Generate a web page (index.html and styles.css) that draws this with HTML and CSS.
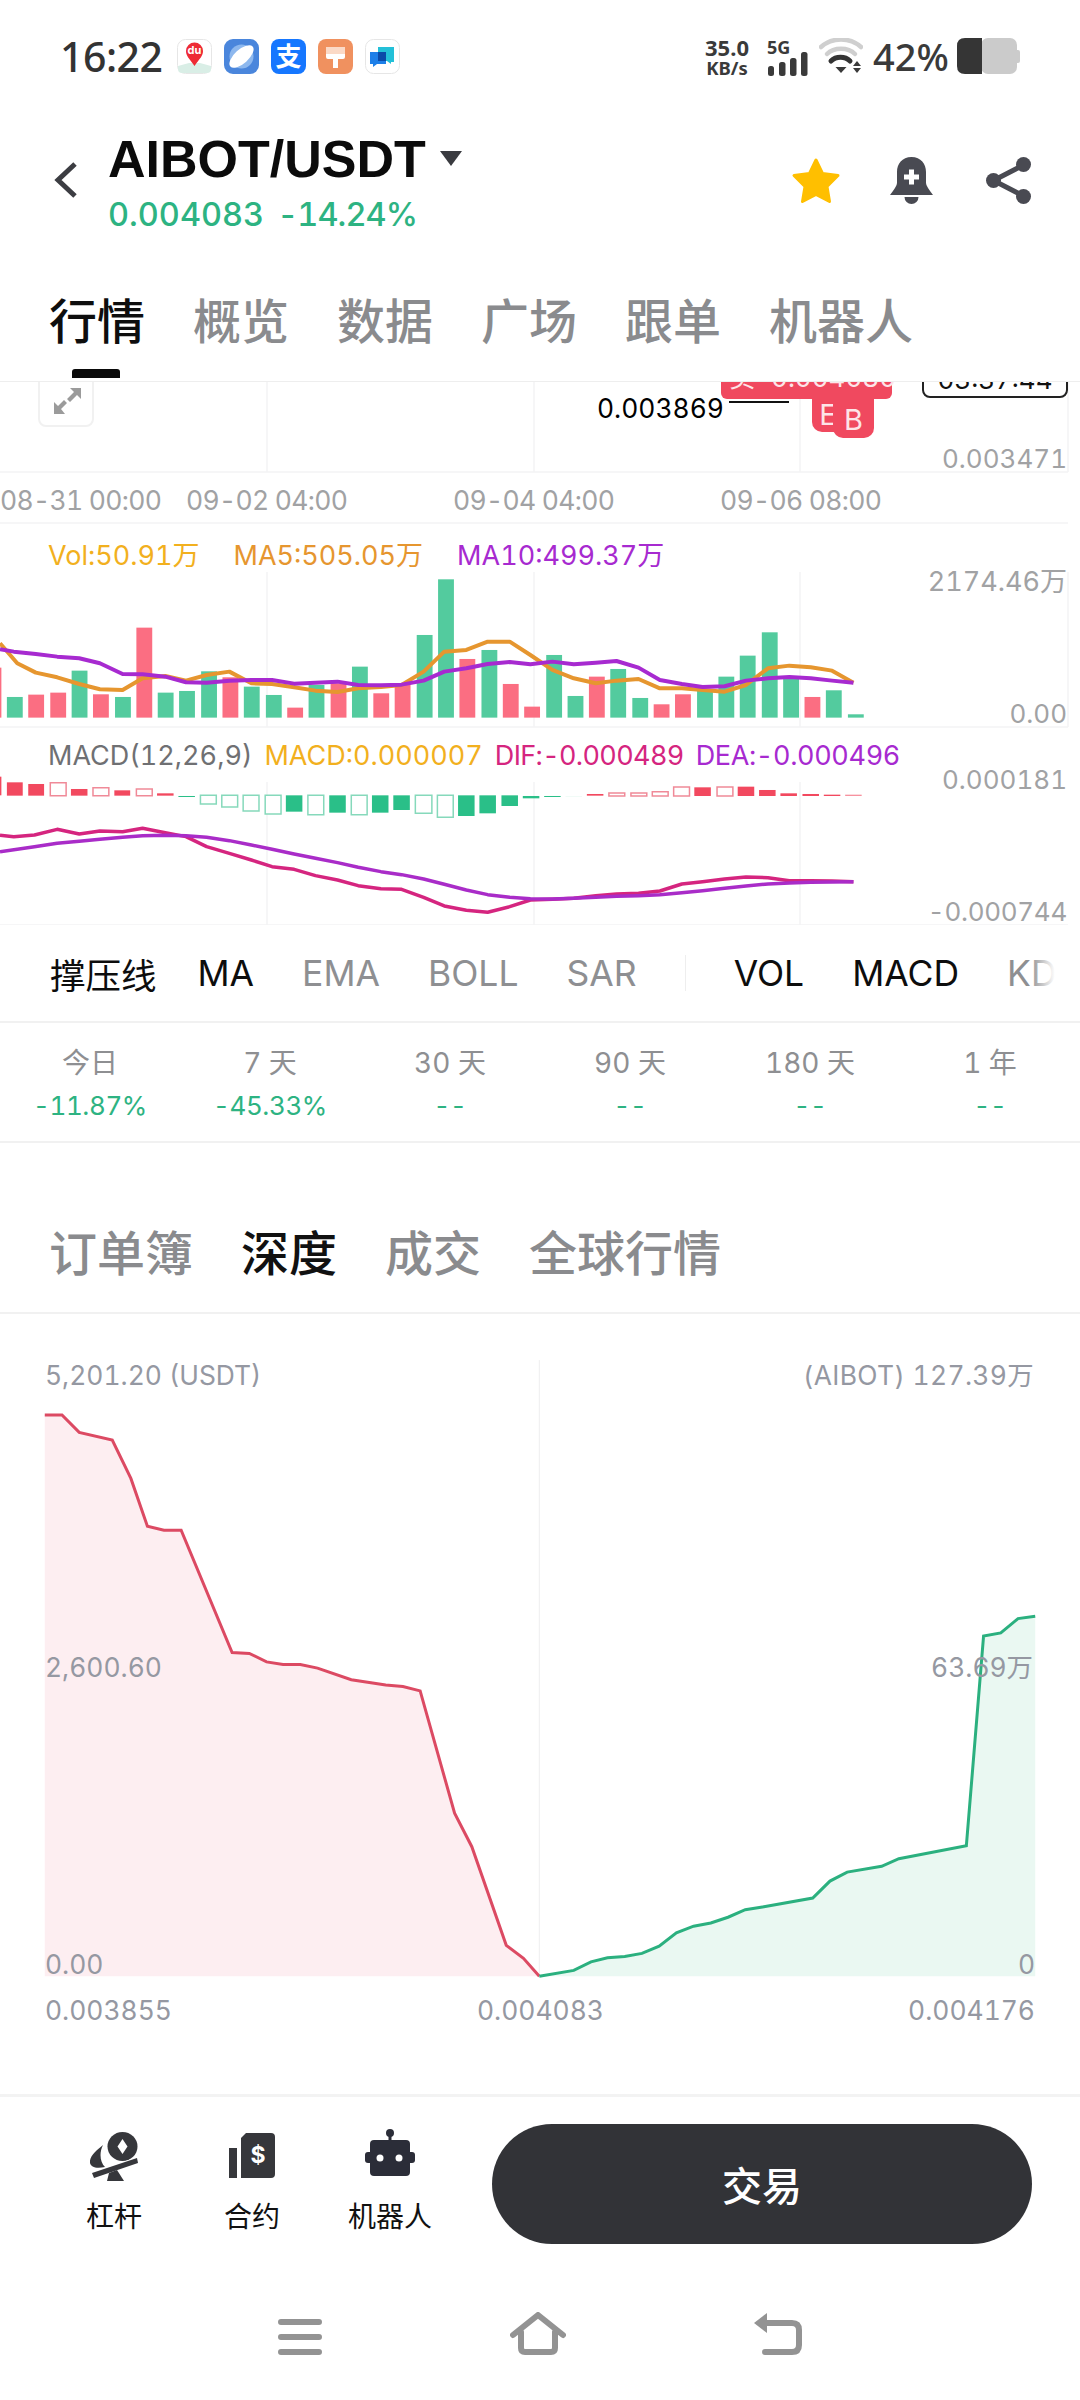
FILE: index.html
```html
<!DOCTYPE html>
<html lang="zh-CN">
<head>
<meta charset="utf-8">
<title>AIBOT/USDT</title>
<link rel="stylesheet" href="styles.css">
</head>
<body>
<div class="page">
  <header class="status">
    <span class="clock">16:22</span>
    <div class="apps">
      <svg class="app" viewBox="0 0 35 35"><rect x=".5" y=".5" width="34" height="34" rx="8" fill="#fff" stroke="#e6e6e6"/><path d="M1 27 L12 24 L23 24 L34 27 V30 Q34 34 30 34 H5 Q1 34 1 30Z" fill="#d9eee6"/><path d="M17.500 27 C12 19 9 17 9 12 A8.500 8.500 0 0 1 26 12 C26 17 23 19 17.500 27Z" fill="#ee2b35"/><text x="17.500" y="15" class="du">du</text></svg>
      <svg class="app" viewBox="0 0 35 35"><rect width="35" height="35" rx="9" fill="#4a86dc"/><circle cx="17.500" cy="17.500" r="12" fill="#8db8ee"/><ellipse cx="17.500" cy="17.500" rx="15" ry="7" transform="rotate(-42 17.500 17.500)" fill="#fff"/></svg>
      <svg class="app" viewBox="0 0 35 35"><rect width="35" height="35" rx="8" fill="#1677ff"/><text x="17.500" y="27" class="zhi">支</text></svg>
      <svg class="app" viewBox="0 0 35 35"><rect width="35" height="35" rx="8" fill="#f0915f"/><path d="M8 8 H27 V18 Q27 20 25 20 H20 V29 H15 V20 H10 Q8 20 8 18Z" fill="#fff"/><rect x="8" y="8" width="19" height="7" fill="#fbd9c6"/></svg>
      <svg class="app" viewBox="0 0 35 35"><rect x=".5" y=".5" width="34" height="34" rx="8" fill="#fff" stroke="#e6e6e6"/><path d="M13 8 H29 V23 H26 V25 L22 22 H13Z" fill="#23c0d8"/><path d="M5 13 H21 V25 H12 L8 28 V25 H5Z" fill="#1d7fe8"/><rect x="13" y="13" width="8" height="9" fill="#0b4aa8"/></svg>
    </div>
    <div class="sys">
      <div class="speed"><span class="speed-num">35.0</span><span class="speed-unit">KB/s</span></div>
      <div class="net">
        <span class="net-type">5G</span>
        <svg class="bars" viewBox="0 0 40 24"><rect x="0" y="14" width="6" height="10" rx="2.500"/><rect x="11" y="10" width="6.500" height="14" rx="2.500"/><rect x="22" y="6" width="6.500" height="18" rx="2.500"/><rect x="33" y="0" width="6.500" height="24" rx="2.500"/></svg>
      </div>
      <svg class="wifi" viewBox="0 0 44 36"><path d="M2 9 C13 -1 31 -1 42 9" class="wifi-off"/><path d="M8 16 C15 9 29 9 36 16" class="wifi-off"/><path d="M12 23 C17 18 26 18 31 23" class="wifi-on"/><path d="M16.500 29 H27.500 L22 35Z"/><path d="M34 28 L38 23 L42 28Z"/><path d="M34 30 H42 L38 35Z"/></svg>
      <span class="pct">42%</span>
      <svg class="battery" viewBox="0 0 63 36"><rect x="24" y="0" width="36" height="36" rx="7" fill="#cbcbcb"/><rect x="58" y="12" width="5" height="13" rx="2" fill="#cbcbcb"/><path d="M25 0 V36 H8 Q0 36 0 28 V8 Q0 0 8 0Z" fill="#353535"/></svg>
    </div>
  </header>

  <section class="head">
    <svg class="back" viewBox="0 0 24 38"><path d="M21 3 L4 19 L21 35"/></svg>
    <div class="pair">
      <div class="pair-title"><span class="pair-name">AIBOT/USDT</span><i class="caret"></i></div>
      <div class="pair-price"><span>0.004083</span><span class="pair-chg">-14.24%</span></div>
    </div>
    <div class="head-actions">
      <svg class="ic-star" viewBox="0 0 50 47"><path d="M25 3 L31.500 16.500 L47 18.500 L36 29.500 L38.500 44.500 L25 37.500 L11.500 44.500 L14 29.500 L3 18.500 L18.500 16.500Z"/></svg>
      <svg class="ic-bell" viewBox="0 0 43 47"><path d="M21.500 0 C12 0 7 7 7 15 V26 Q7 29 0 38 H43 Q36 29 36 26 V15 C36 7 31 0 21.500 0Z"/><path d="M14.500 40 H28.500 A7 7 0 0 1 14.500 40Z"/><path d="M19 12.500 H24 V17.500 H29 V22.500 H24 V27.500 H19 V22.500 H14 V17.500 H19Z" class="plus"/></svg>
      <svg class="ic-share" viewBox="0 0 45 47"><path d="M37.500 8 L7.500 23.500 L37.500 39" class="share-line"/><circle cx="37.500" cy="7.500" r="7.500"/><circle cx="7.500" cy="23.500" r="7.500"/><circle cx="37.500" cy="39.500" r="7.500"/></svg>
    </div>
  </section>

  <nav class="tabs">
    <span class="tab tab-on">行情</span><span class="tab">概览</span><span class="tab">数据</span><span class="tab">广场</span><span class="tab">跟单</span><span class="tab">机器人</span>
  </nav>

  <section class="chart">
    <svg class="chart-svg" viewBox="0 0 1080 543">
      <g class="grid">
        <path d="M267 0 V90 M534 0 V90 M800 0 V90 M1068 0 V90"/>
        <path d="M0 90 H1068 M0 141 H1068 M0 345 H1068 M0 543 H1068"/>
        <path d="M267 190 V345 M534 190 V345 M800 190 V345 M1068 190 V345"/>
        <path d="M267 400 V543 M534 400 V543 M800 400 V543"/>
      </g>
      <g transform="translate(0,-12) scale(.6888,.3333)">
        <g class="vg">
          <rect x="10" y="981" width="23" height="62"/><rect x="104" y="902" width="23" height="141"/><rect x="167" y="981" width="23" height="62"/><rect x="229" y="968" width="23" height="75"/><rect x="260" y="963" width="23" height="80"/><rect x="292" y="904" width="23" height="139"/><rect x="354" y="950" width="23" height="93"/><rect x="386" y="975" width="23" height="68"/><rect x="448" y="945" width="23" height="98"/><rect x="511" y="890" width="23" height="153"/><rect x="605" y="795" width="23" height="248"/><rect x="636" y="628" width="23" height="415"/><rect x="699" y="840" width="23" height="203"/><rect x="793" y="855" width="23" height="188"/><rect x="824" y="978" width="23" height="65"/><rect x="886" y="897" width="23" height="146"/><rect x="918" y="984" width="23" height="59"/><rect x="1012" y="960" width="23" height="83"/><rect x="1043" y="920" width="23" height="123"/><rect x="1074" y="857" width="23" height="186"/><rect x="1106" y="787" width="23" height="256"/><rect x="1137" y="920" width="23" height="123"/><rect x="1199" y="961" width="23" height="82"/><rect x="1231" y="1033" width="23" height="10"/>
        </g>
        <g class="vr">
          <rect x="-21" y="893" width="23" height="150"/><rect x="41" y="974" width="23" height="69"/><rect x="73" y="968" width="23" height="75"/><rect x="135" y="973" width="23" height="70"/><rect x="198" y="773" width="23" height="270"/><rect x="323" y="922" width="23" height="121"/><rect x="417" y="1013" width="23" height="30"/><rect x="480" y="940" width="23" height="103"/><rect x="542" y="970" width="23" height="73"/><rect x="573" y="945" width="23" height="98"/><rect x="667" y="867" width="23" height="176"/><rect x="730" y="942" width="23" height="101"/><rect x="761" y="1010" width="23" height="33"/><rect x="855" y="920" width="23" height="123"/><rect x="949" y="1003" width="23" height="40"/><rect x="980" y="973" width="23" height="70"/><rect x="1168" y="981" width="23" height="62"/>
        </g>
        <polyline class="ln ma5" points="0,820 25,880 52,908 83,922 115,942 145,958 178,960 207,925 240,918 270,932 300,915 333,905 365,940 395,942 427,952 458,962 490,966 520,955 553,951 583,945 615,905 645,845 677,840 708,815 740,815 770,855 802,900 833,925 865,940 895,932 927,927 958,955 990,955 1020,960 1052,965 1083,945 1115,895 1146,887 1177,892 1208,902 1239,938"/>
        <polyline class="ln ma10" points="0,838 20,845 52,852 83,860 115,865 145,880 178,912 207,913 240,920 270,937 300,938 333,932 365,930 395,930 427,941 458,938 490,935 520,945 553,946 583,944 615,932 645,905 677,895 708,882 740,876 770,883 802,875 833,883 865,878 895,873 927,893 958,930 990,942 1020,951 1052,949 1083,932 1115,925 1146,921 1177,925 1208,932 1239,938"/>
      </g>
      <g transform="translate(0,348) scale(.6888,.3333)">
        <g class="mr">
          <rect x="-21" y="140" width="23" height="56"/><rect x="10" y="157" width="23" height="40"/><rect x="41" y="162" width="23" height="35"/><rect x="103" y="177" width="24" height="20"/><rect x="166" y="181" width="23" height="16"/><rect x="228" y="190" width="24" height="7"/><rect x="852" y="192" width="24" height="5"/><rect x="1008" y="172" width="24" height="26"/><rect x="1071" y="170" width="24" height="28"/><rect x="1102" y="180" width="24" height="18"/><rect x="1133" y="190" width="24" height="8"/><rect x="1165" y="192" width="24" height="6"/><rect x="1196" y="194" width="24" height="4"/><rect x="1227" y="194" width="24" height="4" opacity=".6"/>
        </g>
        <g class="mrh">
          <rect x="73" y="158" width="23" height="39"/><rect x="135" y="173" width="23" height="24"/><rect x="198" y="177" width="23" height="20"/><rect x="884" y="189" width="23" height="9"/><rect x="916" y="189" width="23" height="9"/><rect x="947" y="185" width="23" height="13"/><rect x="978" y="171" width="23" height="27"/><rect x="1041" y="171" width="23" height="27"/>
        </g>
        <g class="mg">
          <rect x="259" y="198" width="24" height="3"/><rect x="415" y="196" width="24" height="49"/><rect x="478" y="196" width="24" height="52"/><rect x="540" y="196" width="24" height="52"/><rect x="571" y="196" width="24" height="44"/><rect x="665" y="196" width="24" height="62"/><rect x="696" y="196" width="24" height="54"/><rect x="728" y="196" width="24" height="32"/><rect x="759" y="198" width="24" height="7"/><rect x="790" y="198" width="24" height="3"/><rect x="821" y="198" width="24" height="1" opacity=".2"/>
        </g>
        <g class="mgh">
          <rect x="291" y="196" width="23" height="26"/><rect x="322" y="196" width="23" height="35"/><rect x="353" y="196" width="23" height="47"/><rect x="385" y="196" width="23" height="56"/><rect x="447" y="196" width="23" height="58"/><rect x="510" y="196" width="23" height="58"/><rect x="603" y="196" width="24" height="54"/><rect x="635" y="196" width="23" height="66"/>
        </g>
        <polyline class="ln dif" points="0,316 20,320 50,315 83,298 115,312 145,303 178,305 207,295 240,308 270,320 300,350 333,370 365,390 395,410 427,418 458,437 490,450 520,467 553,476 583,478 615,502 645,528 677,541 708,547 740,530 770,510 802,508 833,505 865,497 895,492 927,490 958,483 990,462 1020,455 1052,447 1083,441 1115,443 1146,452 1177,452 1208,453 1239,455"/>
        <polyline class="ln dea" points="0,365 50,350 83,340 115,334 145,328 178,322 207,317 240,316 270,317 300,322 333,332 365,345 395,358 427,372 458,385 490,398 520,412 553,425 583,434 615,447 645,463 677,480 708,494 740,502 770,506 802,507 833,505 865,502 895,499 927,497 958,494 990,488 1020,482 1052,475 1083,468 1115,462 1146,459 1177,457 1208,456 1239,455"/>
      </g>
    </svg>

    <div class="expand">
      <svg viewBox="0 0 28 27"><path d="M17 1 H28 V12 L24 8 L17 15 L14 12 L21 5Z M1 27 V15 L5 19 L11 13 L14 16 L8 22 L12 27Z"/></svg>
    </div>
    <span class="mark-low">0.003869</span><i class="mark-line"></i>
    <div class="sell-tag"><span>卖</span><span>0.004080</span></div>
    <div class="pin pin-e">E</div>
    <div class="pin pin-b">B</div>
    <div class="count">03:37:44</div>

    <span class="ax ax-price">0.003471</span>
    <span class="date d1">08-31 00:00</span><span class="date d2">09-02 04:00</span><span class="date d3">09-04 04:00</span><span class="date d4">09-06 08:00</span>

    <div class="legend l-vol"><span class="c-vol">Vol:50.91万</span><span class="c-ma5">MA5:505.05万</span><span class="c-ma10">MA10:499.37万</span></div>
    <span class="ax ax-volmax">2174.46万</span>
    <span class="ax ax-volmin">0.00</span>

    <div class="legend l-macd"><span class="c-macd0">MACD(12,26,9)</span><span class="c-vol">MACD:0.000007</span><span class="c-dif">DIF:-0.000489</span><span class="c-dea">DEA:-0.000496</span></div>
    <span class="ax ax-mtop">0.000181</span>
    <span class="ax ax-mbot">-0.000744</span>
  </section>

  <section class="inds">
    <span class="ind ind-on ind-cn">撑压线</span><span class="ind ind-on">MA</span><span class="ind">EMA</span><span class="ind">BOLL</span><span class="ind">SAR</span><i class="ind-div"></i><span class="ind ind-on">VOL</span><span class="ind ind-on">MACD</span><span class="ind">KD</span>
  </section>

  <section class="ranges">
    <div class="rng"><span class="rng-k">今日</span><span class="rng-v">-11.87%</span></div>
    <div class="rng"><span class="rng-k">7 天</span><span class="rng-v">-45.33%</span></div>
    <div class="rng"><span class="rng-k">30 天</span><span class="rng-v">--</span></div>
    <div class="rng"><span class="rng-k">90 天</span><span class="rng-v">--</span></div>
    <div class="rng"><span class="rng-k">180 天</span><span class="rng-v">--</span></div>
    <div class="rng"><span class="rng-k">1 年</span><span class="rng-v">--</span></div>
  </section>

  <nav class="tabs tabs2">
    <span class="tab">订单簿</span><span class="tab tab-dark">深度</span><span class="tab">成交</span><span class="tab">全球行情</span>
  </nav>

  <section class="depth">
    <svg class="depth-svg" viewBox="0 0 1568 1568" preserveAspectRatio="none">
      <path class="mid" d="M783 45 V1425"/>
      <polygon class="fill-r" points="65,168 90,168 115,207 163,224 190,310 214,417 238,426 263,426 337,700 362,702 387,721 411,727 436,727 461,735 510,761 560,773 585,776 610,786 660,1060 685,1135 735,1356 760,1385 783,1425 65,1425"/>
      <polygon class="fill-g" points="783,1425 833,1412 858,1393 882,1384 907,1381 932,1374 957,1358 982,1328 1007,1313 1032,1306 1057,1293 1082,1276 1107,1270 1180,1250 1205,1212 1230,1192 1280,1179 1305,1162 1403,1133 1428,663 1453,656 1478,624 1503,619 1503,1425"/>
      <polyline class="line-r" points="65,168 90,168 115,207 163,224 190,310 214,417 238,426 263,426 337,700 362,702 387,721 411,727 436,727 461,735 510,761 560,773 585,776 610,786 660,1060 685,1135 735,1356 760,1385 783,1425"/>
      <polyline class="line-g" points="783,1425 833,1412 858,1393 882,1384 907,1381 932,1374 957,1358 982,1328 1007,1313 1032,1306 1057,1293 1082,1276 1107,1270 1180,1250 1205,1212 1230,1192 1280,1179 1305,1162 1403,1133 1428,663 1453,656 1478,624 1503,619"/>
    </svg>
    <span class="dl dl-lt">5,201.20 (USDT)</span>
    <span class="dl dl-rt">(AIBOT) 127.39万</span>
    <span class="dl dl-lm">2,600.60</span>
    <span class="dl dl-rm">63.69万</span>
    <span class="dl dl-lb">0.00</span>
    <span class="dl dl-rb">0</span>
    <span class="dl dl-x1">0.003855</span>
    <span class="dl dl-x2">0.004083</span>
    <span class="dl dl-x3">0.004176</span>
  </section>

  <section class="actions">
    <div class="act">
      <svg class="act-ic ic-lever" viewBox="0 0 48 49"><ellipse cx="32.500" cy="14.500" rx="15" ry="14.500"/><path d="M13 13 C7 18 -1 24 0 31 C1 35 6 37 15 35 C10 30 9 21 13 13Z"/><path d="M2 41 L47 26 L48 31 L4 46Z" class="lever-gap"/><path d="M19 41 L27 38 L34 49 H17Z"/><path d="M32.500 7 L37.500 14.500 L32.500 22 L27.500 14.500Z" class="lever-d"/></svg>
      <span>杠杆</span>
    </div>
    <div class="act">
      <svg class="act-ic ic-con" viewBox="0 0 46 45"><rect x="0" y="15" width="8" height="30"/><path d="M17 0 H42 Q46 0 46 4 V41 Q46 45 42 45 H12 V5Z"/><text x="29" y="30" class="dollar">$</text></svg>
      <span>合约</span>
    </div>
    <div class="act">
      <svg class="act-ic ic-bot" viewBox="0 0 50 47"><circle cx="25" cy="4" r="4"/><rect x="23.500" y="6" width="3" height="7"/><rect x="5" y="11" width="40" height="36" rx="4"/><rect x="0" y="23" width="50" height="11" rx="3"/><circle cx="15" cy="29" r="3.500" class="eye"/><circle cx="34" cy="29" r="3.500" class="eye"/></svg>
      <span>机器人</span>
    </div>
    <button class="trade">交易</button>
  </section>

  <footer class="nav">
    <svg class="nav-menu" viewBox="0 0 44 36"><path d="M3 3 H41 M3 18 H41 M3 33 H41"/></svg>
    <svg class="nav-home" viewBox="0 0 56 43"><path d="M3 23 L28 3 L53 23 M11 20 V36 Q11 40 15 40 H41 Q45 40 45 36 V20"/></svg>
    <svg class="nav-back" viewBox="0 0 48 42"><path d="M8 10 H38 Q45 10 45 17 V32 Q45 39 38 39 H11"/><path d="M13 0 V20 L0 10Z" class="nav-tri"/></svg>
  </footer>
</div>
</body>
</html>
```
FILE: styles.css
```css
* { box-sizing: border-box; }
html, body { margin: 0; padding: 0; background: #fff; }
body { font-family: Inter, "Noto Sans CJK SC", sans-serif; font-variant-numeric: tabular-nums; }
.page { width: 1080px; height: 2400px; overflow: hidden; }
svg { display: block; }
i { display: block; }

/* status bar */
.status { height: 112px; display: flex; align-items: center; padding-left: 60px; color: #333; }
.clock { font-family: "Noto Sans", sans-serif; font-size: 41px; font-weight: 500; width: 117px; letter-spacing: -.5px; }
.apps { display: flex; gap: 12px; }
.app { width: 35px; height: 35px; }
.du { font: 700 11px Inter, sans-serif; fill: #fff; text-anchor: middle; }
.zhi { font: 700 26px "Noto Sans CJK SC", sans-serif; fill: #fff; text-anchor: middle; }
.sys { margin-left: auto; margin-right: 60px; display: flex; align-items: center; }
.speed { width: 50px; display: flex; flex-direction: column; align-items: center; font-family: "Noto Sans", sans-serif; font-weight: 700; color: #3a3a3a; }
.speed-num { font-size: 22px; line-height: 22px; }
.speed-unit { font-size: 18.500px; line-height: 19px; }
.net { margin-left: 16px; width: 40px; height: 38px; position: relative; margin-top: 2px; }
.net-type { position: absolute; left: -1px; top: -3px; font: 700 18px "Noto Sans", sans-serif; color: #3a3a3a; }
.bars { position: absolute; left: 0; bottom: 0; width: 40px; height: 24px; fill: #3a3a3a; }
.wifi { width: 44px; height: 36px; margin-left: 11px; fill: #3a3a3a; }
.wifi path.wifi-off { fill: none; stroke: #cfcfcf; stroke-width: 4.500; stroke-linecap: round; }
.wifi path.wifi-on { fill: none; stroke: #333; stroke-width: 5; stroke-linecap: round; }
.pct { font-family: "Noto Sans", sans-serif; font-size: 38px; font-weight: 500; margin-left: 10px; width: 84px; color: #3a3a3a; white-space: nowrap; }
.battery { width: 63px; height: 36px; }

/* pair header */
.head { height: 136px; display: flex; align-items: center; padding-left: 54px; }
.back { width: 24px; height: 38px; fill: none; stroke: #3c3d42; stroke-width: 5; }
.pair { margin-left: 30px; align-self: flex-start; margin-top: 19px; }
.pair-title { display: flex; align-items: center; height: 56px; }
.pair-name { font: 700 52px "Liberation Sans", sans-serif; color: #0b0b0b; }
.caret { width: 0; height: 0; margin: -2px 0 0 14px; border-left: 11px solid transparent; border-right: 11px solid transparent; border-top: 15px solid #3a3b40; }
.pair-price { display: flex; gap: 13px; margin-top: 6px; font-size: 32.500px; font-weight: 500; line-height: 44px; color: #2db382; }
.pair-chg { letter-spacing: -.9px; }
.head-actions { margin-left: auto; margin-right: 49px; display: flex; align-items: center; }
.ic-star { width: 50px; height: 47px; fill: #ffbf00; stroke: #ffbf00; stroke-width: 3; stroke-linejoin: round; }
.ic-bell { width: 43px; height: 47px; margin-left: 49px; fill: #494a52; }
.ic-bell .plus { fill: #fff; }
.ic-share { width: 45px; height: 47px; margin-left: 53px; fill: #494a52; }
.share-line { fill: none; stroke: #494a52; stroke-width: 5; }

/* tab rows */
.tabs { height: 134px; display: flex; gap: 48px; padding: 6px 0 0 49px; align-items: center; border-bottom: 1px solid #eeeeee; font-family: "Noto Sans CJK SC", sans-serif; position: relative; }
.tab { font-size: 48px; font-weight: 500; color: #8a8b8e; line-height: 1; }
.tab-on { color: #0e0e0e; position: relative; }
.tab-on::after { content: ""; position: absolute; left: 23px; top: 75px; width: 48px; height: 9px; background: #0a0a0a; border-radius: 3px 3px 0 0; }
.tab-dark { color: #111; }

/* kline chart */
.chart { height: 543px; position: relative; overflow: hidden; font-size: 27px; }
.chart-svg { position: absolute; left: 0; top: 0; width: 1080px; height: 543px; }
.grid path { fill: none; stroke: #f4f4f5; stroke-width: 1.500; }
.vg rect { fill: #53cb9e; }
.vr rect { fill: #fb6e82; }
.ln { fill: none; stroke-width: 4; stroke-linejoin: round; vector-effect: non-scaling-stroke; }
.ma5 { stroke: #e6962f; }
.ma10 { stroke: #a72ad0; }
.dif { stroke: #d5257f; stroke-width: 3.500; }
.dea { stroke: #a92cc8; stroke-width: 3.500; }
.mr rect { fill: #f2495f; }
.mg rect { fill: #2abf88; }
.mrh rect { fill: #fff; stroke: #f08a98; stroke-width: 1.500; vector-effect: non-scaling-stroke; }
.mgh rect { fill: #fff; stroke: #86d9bb; stroke-width: 1.500; vector-effect: non-scaling-stroke; }

.expand { position: absolute; left: 38px; top: -12px; width: 56px; height: 57px; background: #fff; border: 2px solid #f1f1f1; border-radius: 8px; padding: 15px 0 0 13px; }
.expand svg { width: 28px; height: 27px; fill: #9b9b9b; }
.mark-low { position: absolute; left: 597px; top: 9px; color: #000; line-height: 34px; font-size: 26.400px; }
.mark-line { position: absolute; left: 729px; top: 19px; width: 60px; height: 2px; background: #111; }
.sell-tag { position: absolute; left: 721px; top: -24px; width: 171px; height: 41px; background: #f0495f; border-radius: 6px; color: #fde4e8; display: flex; gap: 16px; padding-left: 8px; line-height: 40px; white-space: nowrap; font-size: 26px; }
.pin { position: absolute; background: #f0495f; color: #fde4e8; text-align: center; font-size: 29px; line-height: 32px; border-radius: 0 0 10px 10px; }
.pin-e { left: 812px; top: 14px; width: 40px; height: 36px; padding: 3px 8px 0 0; }
.pin-b { left: 833px; top: 14px; width: 41px; height: 42px; padding-top: 8px; }
.count { position: absolute; left: 922px; top: -24px; width: 146px; height: 40px; border: 2px solid #222; border-radius: 8px; color: #111; text-align: center; line-height: 40px; background: #fff; white-space: nowrap; font-size: 26px; }
.ax { position: absolute; right: 13px; color: #a1a2a4; line-height: 34px; white-space: nowrap; font-size: 26px; }
.ax-price { top: 60px; }
.date { position: absolute; top: 101px; color: #a1a2a4; line-height: 34px; white-space: nowrap; font-size: 26.500px; letter-spacing: -.7px; }
.d1 { left: 0; } .d2 { left: 186px; } .d3 { left: 453px; } .d4 { left: 720px; }
.legend { position: absolute; display: flex; line-height: 34px; white-space: nowrap; }
.l-vol { left: 48px; top: 157px; gap: 34px; }
.l-macd { left: 48px; top: 357px; gap: 12px; }
.c-vol { color: #f2b01e; } .c-ma5 { color: #e6962f; } .c-ma10 { color: #a72ad0; } .c-macd0 { color: #6f7073; }
.c-dif { color: #d5257f; letter-spacing: -.65px; }
.c-dea { color: #a72ad0; letter-spacing: -.35px; }
.ax-volmax { top: 183px; font-size: 27px; }
.ax-volmin { top: 315px; }
.ax-mtop { top: 381px; }
.ax-mbot { top: 513px; letter-spacing: -.3px; }

/* indicator row */
.inds { height: 98px; display: flex; align-items: center; gap: 48px; padding-left: 50px; border-bottom: 2px solid #f1f1f1; font-size: 35.500px; color: #8e8f92; position: relative; white-space: nowrap; overflow: hidden; }
.inds::after { content: ""; position: absolute; left: 1030px; top: 0; bottom: 0; width: 50px; background: linear-gradient(90deg, rgba(255,255,255,0), #fff 50%); }
.ind-on { color: #0d0d0d; }
.ind-cn { font-family: "Noto Sans CJK SC", sans-serif; margin-right: -7px; }
.ind-div { width: 1px; height: 36px; background: #eeeeee; }

/* period returns */
.ranges { height: 120px; display: grid; grid-template-columns: repeat(6, 180px); border-bottom: 2px solid #f1f1f1; }
.rng { display: flex; flex-direction: column; align-items: center; padding-top: 20px; }
.rng-k { font-size: 28px; line-height: 40px; color: #8e8f92; font-family: Inter, "Noto Sans CJK SC", sans-serif; }
.rng-v { font-size: 26px; line-height: 34px; margin-top: 6px; color: #2db382; letter-spacing: -.4px; }

.tabs2 { height: 171px; gap: 48px; padding: 83px 0 0 49px; align-items: flex-start; border-bottom: 2px solid #f1f1f1; }

/* depth chart */
.depth { height: 780px; position: relative; padding-top: 26px; }
.depth-svg { width: 1080px; height: 700px; }
.mid { fill: none; stroke: #eeeeef; stroke-width: 1; vector-effect: non-scaling-stroke; }
.fill-r { fill: #fdeef1; }
.fill-g { fill: #eaf8f2; }
.line-r { fill: none; stroke: #dc4a63; stroke-width: 3; vector-effect: non-scaling-stroke; }
.line-g { fill: none; stroke: #2bb07f; stroke-width: 3; vector-effect: non-scaling-stroke; }
.dl { position: absolute; font-size: 26.400px; line-height: 34px; color: #9598a2; white-space: nowrap; }
.dl-lt { left: 45px; top: 44px; }
.dl-rt { right: 46px; top: 44px; letter-spacing: .35px; }
.dl-lm { left: 45px; top: 336px; }
.dl-rm { right: 47px; top: 336px; }
.dl-lb { left: 45px; top: 633px; }
.dl-rb { right: 45px; top: 633px; }
.dl-x1 { left: 45px; top: 679px; }
.dl-x2 { left: 477px; top: 679px; }
.dl-x3 { right: 45px; top: 679px; }

/* bottom actions */
.actions { height: 170px; border-top: 3px solid #f3f3f3; display: flex; padding: 27px 48px 0 45px; align-items: flex-start; }
.act { width: 138px; display: flex; flex-direction: column; align-items: center; font-family: "Noto Sans CJK SC", sans-serif; font-size: 28px; color: #111; line-height: 40px; }
.act-ic { height: 49px; margin-bottom: 14px; margin-top: 8px; fill: #36373b; }
.ic-lever { width: 48px; }
.lever-d { fill: #fff; }
.lever-gap { stroke: #fff; stroke-width: 1.500; paint-order: stroke; }
.ic-con { width: 46px; height: 45px; margin-top: 9px; margin-bottom: 17px; }
.dollar { font: 700 23px Inter, sans-serif; fill: #fff; text-anchor: middle; }
.ic-bot { width: 50px; height: 47px; margin-top: 5px; margin-bottom: 19px; fill: #2b2d38; }
.eye { fill: #fff; }
.trade { margin-left: 33px; width: 540px; height: 120px; border: 0; border-radius: 60px; background: #323337; color: #fff; font-family: "Noto Sans CJK SC", sans-serif; font-size: 40px; font-weight: 500; }

/* system nav */
.nav { height: 136px; display: flex; align-items: flex-start; padding: 48px 0 0 278px; gap: 188px; }
.nav svg { fill: none; stroke: #939393; stroke-width: 6; stroke-linecap: round; stroke-linejoin: round; }
.nav-menu { width: 44px; height: 36px; margin-top: 7px; }
.nav-home { width: 56px; height: 43px; }
.nav-back { width: 48px; height: 42px; margin-top: 1px; }
.nav svg .nav-tri { fill: #939393; stroke: none; }
```
